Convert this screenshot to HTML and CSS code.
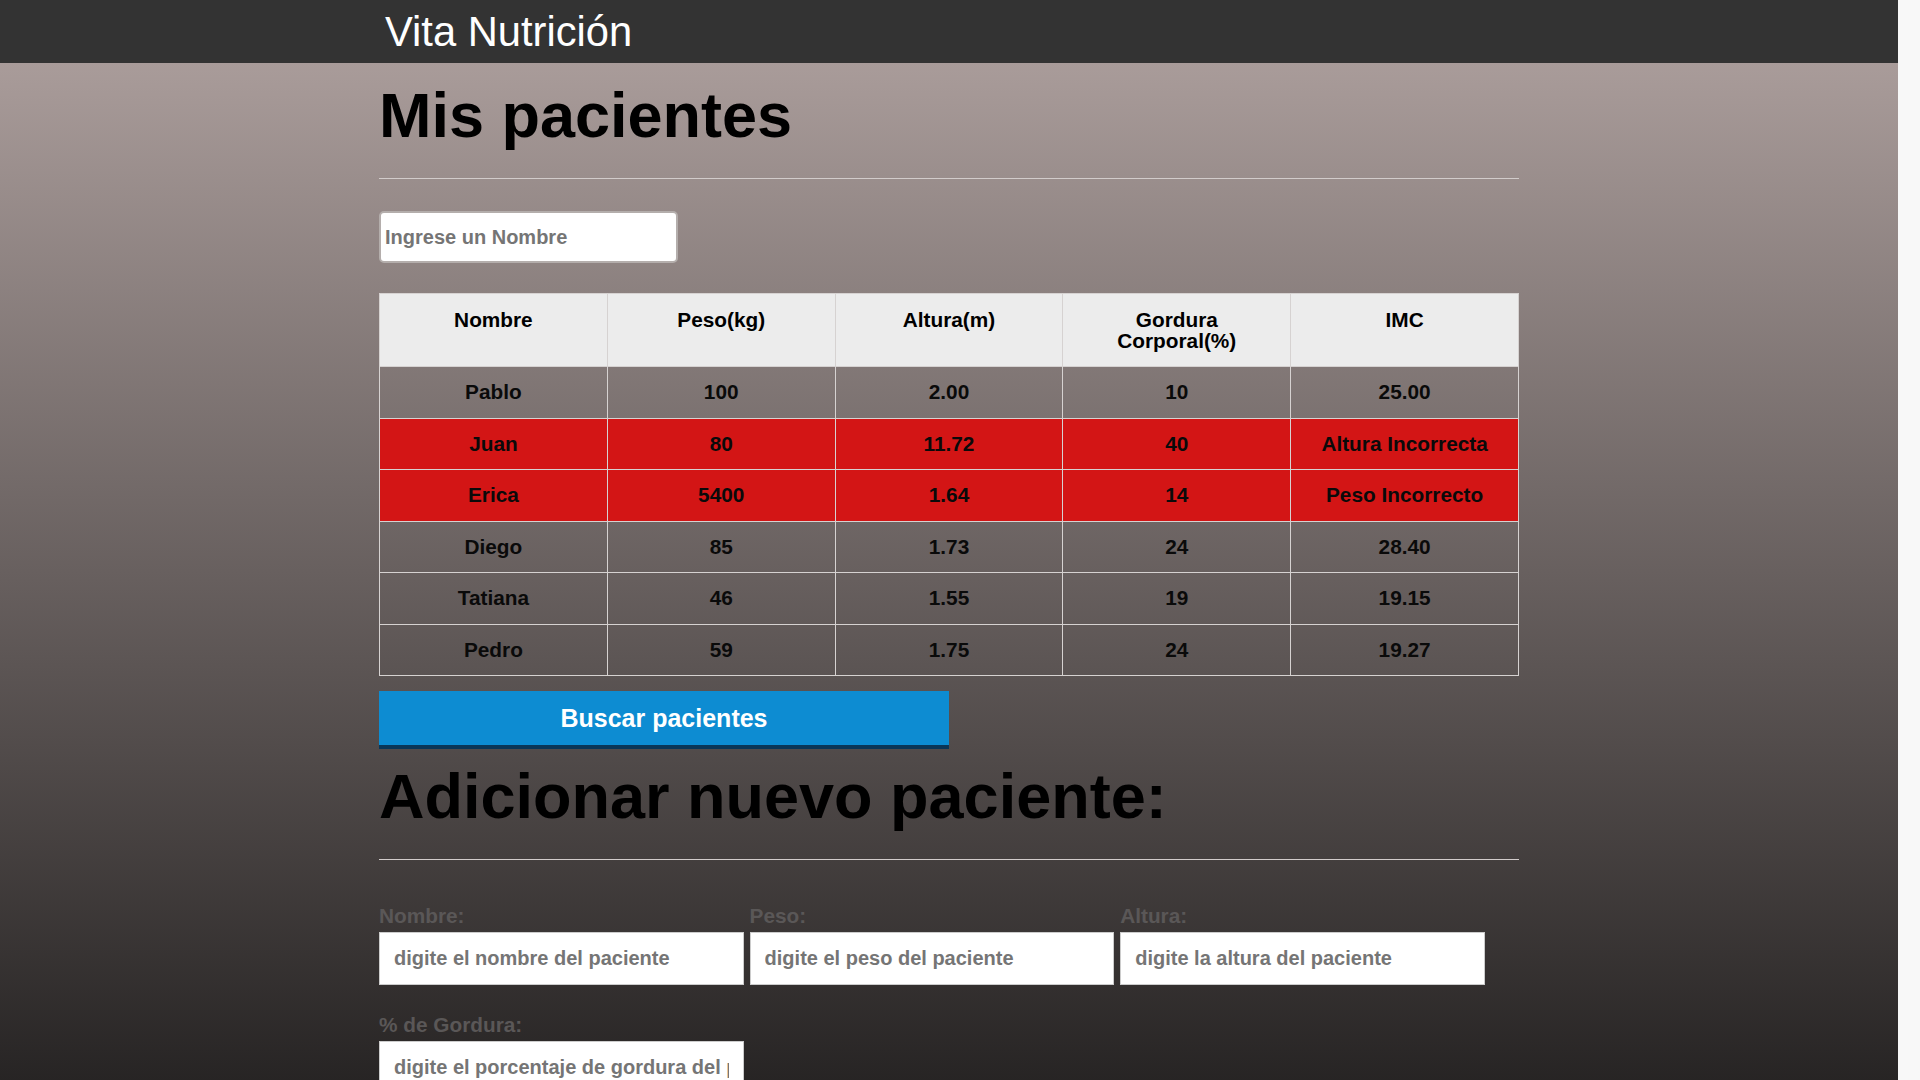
FILE: index.html
```html
<!DOCTYPE html>
<html lang="es">
<head>
<meta charset="utf-8">
<title>Vita Nutrición</title>
<link rel="stylesheet" href="styles.css">
</head>
<body>
<header class="cabecera">
  <div class="container">
    <h1 class="titulo">Vita Nutrición</h1>
  </div>
</header>
<main class="container">
  <section class="pacientes">
    <h2 class="seccion">Mis pacientes</h2>
    <hr class="divisor">
    <input class="filtro" type="text" placeholder="Ingrese un Nombre">
    <table class="tabla">
      <thead>
        <tr>
          <th>Nombre</th>
          <th>Peso(kg)</th>
          <th>Altura(m)</th>
          <th>Gordura Corporal(%)</th>
          <th>IMC</th>
        </tr>
      </thead>
      <tbody>
        <tr><td>Pablo</td><td>100</td><td>2.00</td><td>10</td><td>25.00</td></tr>
        <tr class="invalido"><td>Juan</td><td>80</td><td>11.72</td><td>40</td><td>Altura Incorrecta</td></tr>
        <tr class="invalido"><td>Erica</td><td>5400</td><td>1.64</td><td>14</td><td>Peso Incorrecto</td></tr>
        <tr><td>Diego</td><td>85</td><td>1.73</td><td>24</td><td>28.40</td></tr>
        <tr><td>Tatiana</td><td>46</td><td>1.55</td><td>19</td><td>19.15</td></tr>
        <tr><td>Pedro</td><td>59</td><td>1.75</td><td>24</td><td>19.27</td></tr>
      </tbody>
    </table>
    <button class="boton" type="button">Buscar pacientes</button>
  </section>
  <section class="nuevo">
    <h2 class="seccion seccion-form">Adicionar nuevo paciente:</h2>
    <hr class="divisor">
    <form class="formulario">
      <div class="grupo">
        <label for="nombre">Nombre:</label>
        <input id="nombre" class="campo" type="text" placeholder="digite el nombre del paciente">
      </div>
      <div class="grupo">
        <label for="peso">Peso:</label>
        <input id="peso" class="campo" type="text" placeholder="digite el peso del paciente">
      </div>
      <div class="grupo">
        <label for="altura">Altura:</label>
        <input id="altura" class="campo" type="text" placeholder="digite la altura del paciente">
      </div>
      <div class="grupo">
        <label for="gordura">% de Gordura:</label>
        <input id="gordura" class="campo" type="text" placeholder="digite el porcentaje de gordura del paciente">
      </div>
      <div class="acciones">
        <button class="boton" type="button">Adicionar</button>
      </div>
    </form>
  </section>
</main>
</body>
</html>
```
FILE: styles.css
```css
html {
  background: #f8f8f8;
}
body {
  margin: 0 22px 0 0;
  min-height: 1237px;
  font-family: "Liberation Sans", Arial, sans-serif;
  font-weight: bold;
  color: #000;
  background: linear-gradient(to bottom, #b1a3a1 0px, #131212 1237px);
}
.container {
  width: 1140px;
  margin: 0 auto;
}
.cabecera {
  background: #333333;
  height: 63px;
}
.titulo {
  margin: 0;
  padding: 8px 0 0 6px;
  font-size: 41.7px;
  line-height: 48px;
  font-weight: normal;
  color: #ffffff;
}
.seccion {
  margin: 16px 0 0;
  font-size: 63px;
  line-height: 72px;
  font-weight: bold;
}
.seccion-form {
  margin-top: 11px;
}
.divisor {
  margin: 27px 0 0;
  border: 0;
  border-top: 1px solid #d2cccb;
  height: 0;
}
.filtro {
  display: block;
  box-sizing: border-box;
  margin-top: 32px;
  width: 299px;
  height: 52px;
  padding: 0 4px;
  border: 2px solid #b4aeac;
  border-radius: 5px;
  background: #ffffff;
  font-family: inherit;
  font-weight: bold;
  font-size: 20px;
}
.filtro::placeholder,
.campo::placeholder {
  color: #757575;
  opacity: 1;
}
.tabla {
  margin-top: 30px;
  width: 100%;
  table-layout: fixed;
  border-collapse: collapse;
  border: 1px solid #d6d2d1;
  font-size: 20.8px;
}
.tabla th,
.tabla td {
  border: 1px solid #d6d2d1;
  text-align: center;
}
.tabla th {
  background: #ececec;
  vertical-align: top;
  padding: 15px 30px;
  line-height: 21px;
}
.tabla td {
  padding: 14px 8px;
  line-height: 22.5px;
  color: #0a0a0a;
}
.tabla .invalido td {
  background: #d31515;
}
.boton {
  display: block;
  box-sizing: border-box;
  margin-top: 15px;
  width: 50%;
  height: 58px;
  padding: 0;
  border: 0;
  border-bottom: 4px solid #0a3657;
  background: #0d8cd2;
  color: #ffffff;
  font-family: inherit;
  font-weight: bold;
  font-size: 25px;
}
.formulario {
  margin-top: 44px;
  display: flex;
  flex-wrap: wrap;
  column-gap: 5.8px;
  row-gap: 28px;
  padding-bottom: 40px;
}
.grupo {
  width: 32%;
  display: flex;
  flex-direction: column;
  gap: 4px;
}
.grupo label {
  color: #5a5757;
  font-size: 20.8px;
  line-height: 24px;
}
.campo {
  box-sizing: border-box;
  width: 100%;
  height: 53px;
  padding: 0 14px;
  border: 1px solid #cccccc;
  background: #ffffff;
  font-family: inherit;
  font-weight: bold;
  font-size: 20px;
}
.acciones {
  width: 100%;
}
.acciones .boton {
  margin-top: 0;
}
```
